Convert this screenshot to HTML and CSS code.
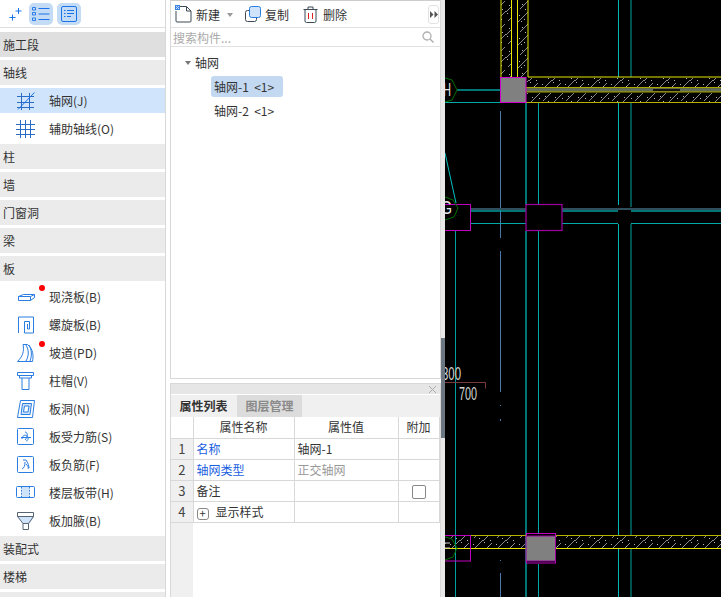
FILE: index.html
```html
<!DOCTYPE html>
<html lang="zh">
<head>
<meta charset="utf-8">
<title>轴网</title>
<link rel="stylesheet" href="styles.css">
</head>
<body>
<svg class="defs" width="0" height="0">
  <defs>
    <pattern id="hatch" width="23" height="23" patternUnits="userSpaceOnUse">
      <path d="M0 12L12 0M11 23L23 11M14 9L22 1M2 21L9 14" stroke="#8a8a8a" stroke-width="1" fill="none"/>
      <path d="M3 5h1v1H3zM7 11h1v1H7zM16 4h1v1h-1zM19 9h1v1h-1zM5 17h1v1H5zM13 15h1v1h-1zM18 19h1v1h-1zM10 6h1v1h-1zM1 13h1v1H1zM15 21h1v1h-1zM9 20h1v1H9z" fill="#b5b5b5"/>
    </pattern>
  </defs>
</svg>
<aside class="side">
  <div class="side-tools">
    <span class="tool-plain">
      <svg width="14" height="14" viewBox="0 0 14 14"><path d="M9.5 1v6M6.5 4h6M3.5 7.500v6M.5 10.500h6" stroke="#1a73e8" fill="none"/></svg>
    </span>
    <span class="tool-on">
      <svg width="18" height="16" viewBox="0 0 18 16"><path d="M6.500 2.500h11M6.500 8h11M6.500 13.500h11" stroke="#1a73e8" fill="none"/><path d="M.5 1.500h3v2.500h-3zM.5 6.500h3v2.500h-3zM.5 12h3v2.500h-3z" stroke="#1a73e8" fill="none" stroke-width=".9"/></svg>
    </span>
    <span class="tool-on">
      <svg width="16" height="16" viewBox="0 0 16 16"><rect x=".5" y=".5" width="15" height="15" rx="1.500" stroke="#1a73e8" fill="none"/><path d="M3 4.500h1.500M6 4.500h7M3 7.500h1.500M6 7.500h7M3 10.500h1.500M6 10.500h4" stroke="#1a73e8" fill="none"/></svg>
    </span>
  </div>
  <div class="sec sec-dark">施工段</div>
  <div class="sec">轴线</div>
  <div class="item item-on"><span class="ico">
    <svg width="20" height="20" viewBox="0 0 20 20"><path d="M1 5.500h17M1 11.500h17M1 16.500h17M5.500 2v17M13.500 2v17" stroke="#2a6cc4" fill="none"/><path d="M2 18.500L18.500 1.500" stroke="#1a73e8" fill="none"/></svg>
  </span>轴网(J)</div>
  <div class="item"><span class="ico">
    <svg width="20" height="20" viewBox="0 0 20 20"><path d="M0 5.500h19M0 10.500h19M0 15.500h19M4.500 1v18M9.500 1v18M14.500 1v18" stroke="#2a6cc4" fill="none"/></svg>
  </span>辅助轴线(O)</div>
  <div class="sec">柱</div>
  <div class="sec">墙</div>
  <div class="sec">门窗洞</div>
  <div class="sec">梁</div>
  <div class="sec">板</div>
  <div class="item"><span class="ico">
    <svg width="20" height="20" viewBox="0 0 20 20"><path d="M2.500 9.500L7.500 7.500h11v3l-4 3h-12zM2.500 9.500h12v4M14.500 9.500l4-2" stroke="#2a7de1" fill="none"/></svg>
  </span>现浇板(B)<i class="dot"></i></div>
  <div class="item"><span class="ico">
    <svg width="20" height="20" viewBox="0 0 20 20"><path d="M2.500 18V2h15v16h-9V6.500h5v7.500h-2V9" stroke="#2a7de1" fill="none"/></svg>
  </span>螺旋板(B)</div>
  <div class="item"><span class="ico">
    <svg width="20" height="20" viewBox="0 0 20 20"><path d="M7 1.500h4.500c6 5 6 11 5 17h-15c5-5 7-10 5.500-17zM10 2c3 5 3 11 0 16M13 2c3 5 3 11 1 16" stroke="#2a7de1" fill="none"/></svg>
  </span>坡道(PD)<i class="dot"></i></div>
  <div class="item"><span class="ico">
    <svg width="20" height="20" viewBox="0 0 20 20"><path d="M1.500 1.500h16v3h-16zM3.500 4.500v2.500h12V4.500M6 7v11.500h7V7" stroke="#2a7de1" fill="none"/></svg>
  </span>柱帽(V)</div>
  <div class="item"><span class="ico">
    <svg width="20" height="20" viewBox="0 0 20 20"><path d="M4.500 1.500h14l-2 17H1.500z" stroke="#2a7de1" fill="none"/><path d="M6.500 4.500h9l-1.500 11h-9z" fill="#cfe3fa" stroke="#2a7de1"/><path d="M8.500 7h4.500l-1 6h-4.500z" fill="#fff" stroke="#2a7de1"/></svg>
  </span>板洞(N)</div>
  <div class="item"><span class="ico">
    <svg width="20" height="20" viewBox="0 0 20 20"><rect x="1.500" y="1.500" width="16" height="16" rx="1" stroke="#2a7de1" fill="none"/><path d="M5 10.500h10M9 5c3 0 3 5 0 8M6 12c0-3 3-5 5-3 2 2 1 5-1 5" stroke="#2a7de1" fill="none"/></svg>
  </span>板受力筋(S)</div>
  <div class="item"><span class="ico">
    <svg width="20" height="20" viewBox="0 0 20 20"><rect x="1.500" y="1.500" width="16" height="16" rx="1" stroke="#2a7de1" fill="none"/><path d="M7 5h3c2 3 3 6 3 8M9 7c0 4-1 6-3 7M10 9c2 2 3 4 2 5" stroke="#2a7de1" fill="none"/></svg>
  </span>板负筋(F)</div>
  <div class="item"><span class="ico">
    <svg width="20" height="20" viewBox="0 0 20 20"><rect x=".5" y="3.500" width="18" height="11" rx="1" stroke="#2a7de1" fill="none"/><rect x="5" y="4" width="9" height="10" fill="#cfe3fa"/><path d="M5.500 4v10M13.500 4v10" stroke="#2a7de1" stroke-dasharray="1.500 1.500" fill="none"/></svg>
  </span>楼层板带(H)</div>
  <div class="item"><span class="ico">
    <svg width="20" height="20" viewBox="0 0 20 20"><path d="M2 6h16l-5 7H7z" fill="#cfe3fa"/><path d="M1.500 1.500h16v4h-16zM1.500 5.500l5.500 7v6h5.500v-6l5-7M7 12.500h5.500" stroke="#566573" fill="none"/></svg>
  </span>板加腋(B)</div>
  <div class="sec">装配式</div>
  <div class="sec">楼梯</div>
  <div class="sec"></div>
</aside>
<main class="mid">
  <section class="list-panel">
    <div class="bar">
      <span class="bar-btn">
        <svg width="18" height="18" viewBox="0 0 18 18"><path d="M3 1.500h8.500l4.500 4.500v10a1 1 0 0 1-1 1H2a1 1 0 0 1-1-1V6M11.500 1.500V6H16" stroke="#3d4a55" fill="none"/><rect x="0" y="0" width="5" height="5" fill="#3b82e0"/><path d="M1 1h1v1H1zM3 1h1v1H3zM2 2h1v1H2zM1 3h1v1H1zM3 3h1v1H3z" fill="#cfe3fa"/></svg>
        新建<i class="caret-mini"></i>
      </span>
      <span class="bar-btn b2">
        <svg width="16" height="16" viewBox="0 0 16 16"><rect x=".5" y="4.500" width="11" height="11" rx="2" stroke="#3d4a55" fill="#fff"/><rect x="4.500" y=".5" width="11" height="11" rx="2" stroke="#2a7de1" fill="#cfe3fa"/></svg>
        复制
      </span>
      <span class="bar-btn b3">
        <svg width="15" height="17" viewBox="0 0 15 17"><path d="M.5 3.500h14M5 3.500V1h5v2.500M2 3.500v11.500a1.500 1.500 0 0 0 1.500 1.500h8A1.500 1.500 0 0 0 13 15V3.500" stroke="#3d4a55" fill="none"/><path d="M5.500 7v6M9.500 7v6" stroke="#e02020" fill="none"/></svg>
        删除
      </span>
      <span class="more">
        <svg width="8" height="7" viewBox="0 0 8 7"><path d="M0 0l3.500 3.500L0 7zM4.500 0L8 3.500 4.500 7z" fill="#555"/></svg>
      </span>
    </div>
    <div class="search">
      <span class="search-text">搜索构件...</span>
      <svg width="12" height="12" viewBox="0 0 12 12"><circle cx="5" cy="5" r="4" stroke="#b0b0b0" stroke-width="1.300" fill="none"/><path d="M8 8l3.500 3.500" stroke="#b0b0b0" stroke-width="1.500"/></svg>
    </div>
    <div class="tree">
      <div class="tree-root"><i class="caret"></i>轴网</div>
      <div class="leaf leaf-on">轴网-1&nbsp;&nbsp;&lt;1&gt;</div>
      <div class="leaf">轴网-2&nbsp;&nbsp;&lt;1&gt;</div>
    </div>
  </section>
  <section class="prop-panel">
    <div class="closebar">
      <svg width="7" height="7" viewBox="0 0 7 7"><path d="M0 0l7 7M7 0L0 7" stroke="#aaa" fill="none"/></svg>
    </div>
    <div class="tabs">
      <span class="tab tab-on">属性列表</span>
      <span class="tab">图层管理</span>
    </div>
    <div class="table-wrap">
      <table class="props">
        <colgroup><col class="c0"><col class="c1"><col class="c2"><col class="c3"></colgroup>
        <tr><th></th><th>属性名称</th><th>属性值</th><th>附加</th></tr>
        <tr><td class="num">1</td><td class="link">名称</td><td>轴网-1</td><td></td></tr>
        <tr><td class="num">2</td><td class="link">轴网类型</td><td class="muted">正交轴网</td><td></td></tr>
        <tr><td class="num">3</td><td>备注</td><td></td><td class="center"><i class="check"></i></td></tr>
        <tr><td class="num">4</td><td><i class="plus">+</i>显示样式</td><td></td><td></td></tr>
      </table>
    </div>
  </section>
</main>
<div class="strip"><i class="grip"></i></div>
<div class="canvas">
  <svg width="276" height="597" viewBox="445 0 276 597">
    <rect x="445" y="0" width="276" height="597" fill="#000"/>
    <!-- hatched bands -->
    <rect x="501" y="0" width="11" height="77" fill="url(#hatch)"/>
    <rect x="517" y="0" width="11" height="77" fill="url(#hatch)"/>
    <rect x="527" y="78" width="194" height="9" fill="url(#hatch)"/>
    <rect x="527" y="93" width="194" height="9" fill="url(#hatch)"/>
    <rect x="445" y="536" width="276" height="12" fill="url(#hatch)"/>
    <!-- cyan verticals -->
    <path d="M618.500 0v77M618.500 103v102M618.500 224v312M618.500 549v48" stroke="#00b8b8" fill="none"/>
    <path d="M631 0v77M631 103v104M631 224v312M631 549v48" stroke="#00a0a0" fill="none"/>
    <path d="M526 103v102M526 231v366" stroke="#009c9c" stroke-width="1.500" fill="none"/>
    <path d="M538.500 103v102M538.500 231v302M538.500 564v33" stroke="#00a8a8" fill="none"/>
    <path d="M455.500 231v366" stroke="#00a0a0" fill="none"/>
    <path d="M500.500 111v127M500.500 251v1M500.500 252v140M500.500 405v1M500.500 419v2M500.500 560v1M500.500 573v24" stroke="#4a78a8" fill="none"/>
    <!-- horizontals -->
    <path d="M457 90h43" stroke="#009c9c" stroke-width="1.500" fill="none"/>
    <path d="M445 102.500h55" stroke="#00a8a8" fill="none"/>
    <path d="M471 209h55M562 209h159" stroke="#2f4f5f" stroke-width="2" fill="none"/>
    <path d="M471 211h55M562 211h56M631 211h90" stroke="#009c9c" stroke-width="1.500" fill="none"/>
    <path d="M471 223.500h55M562 223.500h56M631 223.500h90" stroke="#00a8a8" fill="none"/>
    <!-- top-right beam -->
    <path d="M501 0v77M511.500 0v77M517.500 0v77M528 0v77H721" stroke="#e6e600" fill="none"/>
    <rect x="526" y="87" width="195" height="5" fill="#666633"/>
    <rect x="526" y="88.500" width="195" height="2.500" fill="#5f6b5f"/>
    <path d="M526 87.500h195M526 92h195" stroke="#a8a800" fill="none"/>
    <path d="M526 102.500h195" stroke="#b4b400" fill="none"/>
    <rect x="653" y="89" width="27" height="2" fill="#111"/>
    <!-- bottom beam -->
    <path d="M445 535.500h276" stroke="#b4b400" fill="none"/>
    <path d="M445 548.500h276" stroke="#e6e600" fill="none"/>
    <!-- columns -->
    <rect x="500.500" y="77.500" width="25.500" height="25" fill="#808080" stroke="#d000d0"/>
    <rect x="526.500" y="533.500" width="29" height="29.500" fill="#000" stroke="#c000c0"/>
    <rect x="526" y="536" width="29.500" height="25" fill="#808080" stroke="#a000a0"/>
    <rect x="526" y="204.500" width="36" height="26" fill="none" stroke="#a000a0" stroke-width="1.200"/>
    <rect x="438" y="204.500" width="32.500" height="26" fill="none" stroke="#c000c0"/>
    <rect x="438" y="535.500" width="32.500" height="25.500" fill="none" stroke="#c000c0"/>
    <!-- axis bubbles -->
    <path d="M445 78l7 2 5 10-5 10-7 2" stroke="#007000" fill="none"/>
    <path d="M445 197l8 3 5 8-4 9-9 3" stroke="#007000" fill="none"/>
    <path d="M445 537l7 2 5 9-4 9-8 3" stroke="#007000" fill="none"/>
    <path d="M445 153l11 50" stroke="#00c0c0" fill="none"/>
    <text class="cad" x="443" y="96" textLength="8" lengthAdjust="spacingAndGlyphs">H</text>
    <text class="cad" x="441" y="214" textLength="11" lengthAdjust="spacingAndGlyphs">G</text>
    <path d="M445 543h5M445 548h5" stroke="#d0d0d0" fill="none"/>
    <!-- dimensions -->
    <path d="M445 382.500h40.500v6" stroke="#7a3a3a" fill="none"/>
    <path d="M445 388l-3-2v4z" fill="#aaa"/>
    <text class="cad thin" x="442" y="380" textLength="19" lengthAdjust="spacingAndGlyphs">300</text>
    <text class="cad thin" x="459" y="400" textLength="18" lengthAdjust="spacingAndGlyphs">700</text>
  </svg>
</div>
</body>
</html>
```
FILE: styles.css
```css
* { box-sizing: border-box; }
html, body { margin: 0; padding: 0; height: 597px; overflow: hidden; }
body {
  display: flex;
  width: 721px;
  background: #fff;
  font-family: "Noto Sans CJK SC", "Liberation Sans", sans-serif;
  font-size: 12px;
  color: #333;
}
.defs { position: absolute; }
i { font-style: normal; }

/* left catalogue */
.side { width: 166px; height: 597px; border-right: 1px solid #d8d8d8; flex: none; overflow: hidden; }
.side-tools { height: 28px; display: flex; align-items: center; gap: 4px; padding-left: 6px; margin-bottom: 4px; border-bottom: 1px solid #dedede; }
.tool-plain { width: 19px; height: 22px; display: flex; align-items: center; justify-content: center; }
.tool-on { width: 24px; height: 22px; border-radius: 5px; background: #c4dbf5; display: flex; align-items: center; justify-content: center; }
.sec { height: 25px; margin-bottom: 3px; padding-left: 3px; line-height: 25px; background: #ebebeb; }
.sec-dark { background: #dfdfdf; }
.item { position: relative; height: 25px; margin-bottom: 3px; display: flex; align-items: center; line-height: 25px; padding-left: 16px; }
.item-on { background: #d0e5fb; }
.ico { width: 33px; height: 20px; flex: none; display: block; }
.ico svg { display: block; }
.dot { position: absolute; left: 39px; top: 1px; width: 6px; height: 6px; border-radius: 50%; background: #f00; }

/* middle column */
.mid { width: 271px; height: 597px; margin-left: 4px; flex: none; display: flex; flex-direction: column; }
.list-panel { height: 379px; flex: none; border: 1px solid #d8d8d8; display: flex; flex-direction: column; border-top-color: #ccc; }
.bar { height: 27px; flex: none; display: flex; align-items: center; padding-left: 4px; border-bottom: 1px solid #e2e2e2; }
.bar-btn { display: flex; align-items: center; gap: 3px; }
.bar-btn svg { display: block; }
.bar-btn.b2 { margin-left: 12px; gap: 4px; }
.bar-btn.b3 { margin-left: 14px; gap: 5px; }
.caret-mini { width: 0; height: 0; margin-left: 4px; margin-top: 1px; border: 3px solid transparent; border-top: 4px solid #999; border-bottom: 0; }
.more { margin-left: auto; margin-right: 1px; width: 11px; height: 19px; border: 1px solid #e2e2e2; border-radius: 3px; display: flex; align-items: center; justify-content: center; }
.search { height: 19px; flex: none; display: flex; align-items: center; justify-content: space-between; padding: 0 6px 0 2px; border-bottom: 1px solid #e2e2e2; }
.search-text { color: #aaa; }
.tree { flex: 1; }
.tree-root { display: flex; align-items: center; height: 21px; margin-top: 5px; padding-left: 14px; }
.caret { width: 0; height: 0; margin-right: 4px; border: 3px solid transparent; border-top: 4px solid #777; border-bottom: 0; }
.leaf { width: 72px; height: 21px; line-height: 21px; margin: 3px 0 3px 40px; padding-left: 3px; border-radius: 3px; white-space: nowrap; }
.leaf-on { background: #c3d9f1; }

.prop-panel { flex: 1; margin-top: 4px; border-top: 1px solid #d8d8d8; border-left: 1px solid #d8d8d8; border-right: 1px solid #d8d8d8; display: flex; flex-direction: column; }
.closebar { height: 10px; flex: none; background: #e6e6e6; display: flex; align-items: center; justify-content: flex-end; padding-right: 4px; }
.tabs { height: 23px; flex: none; display: flex; gap: 1px; background: #f0f0f0; border-top: 1px solid #fff; }
.tab { width: 65px; font-weight: 700; text-align: center; line-height: 22px; color: #8a8a8a; background: #dcdcdc; }
.tab-on { color: #333; background: #f0f0f0; }
.table-wrap { flex: 1; background: linear-gradient(to right, #f0f0f0 22px, #fff 22px); }
.props { width: 268px; table-layout: fixed; border-collapse: collapse; }
.c0 { width: 22px; }
.c1 { width: 101px; }
.c2 { width: 104px; }
.c3 { width: 41px; }
.props th, .props td { height: 21px; padding: 0 2px; border: 1px solid #d8d8d8; font-weight: 400; line-height: 18px; white-space: nowrap; background: #fff; }
.props th { text-align: center; border-top: 0; }
.props th:first-child { border-left: 0; }
.props td { padding-left: 3px; }
.props td.num { padding: 0; text-align: center; background: #f0f0f0; border-left: 0; color: #444; font-size: 13px; }
.link { color: #1a5fe0; }
.muted { color: #999; }
.center { text-align: center; }
.check { display: inline-block; width: 14px; height: 14px; border: 1px solid #888; border-radius: 2px; vertical-align: middle; }
.plus { display: inline-block; width: 12px; height: 12px; margin-right: 7px; border: 1px solid #888; border-radius: 3px; line-height: 9px; text-align: center; font-size: 11px; vertical-align: -1px; }

/* splitter strip */
.strip { position: relative; width: 4px; height: 597px; flex: none; background: #e8e8e8; }
.grip { position: absolute; left: 0; top: 338px; width: 4px; height: 100px; background: #6d7781; }

/* CAD canvas */
.canvas { width: 276px; height: 597px; flex: none; background: #000; }
.canvas svg { display: block; }
.cad { fill: #e8e8e8; font-family: "Liberation Sans", sans-serif; font-size: 18px; }
.thin { font-weight: 400; fill: #d8d8d8; }
```
